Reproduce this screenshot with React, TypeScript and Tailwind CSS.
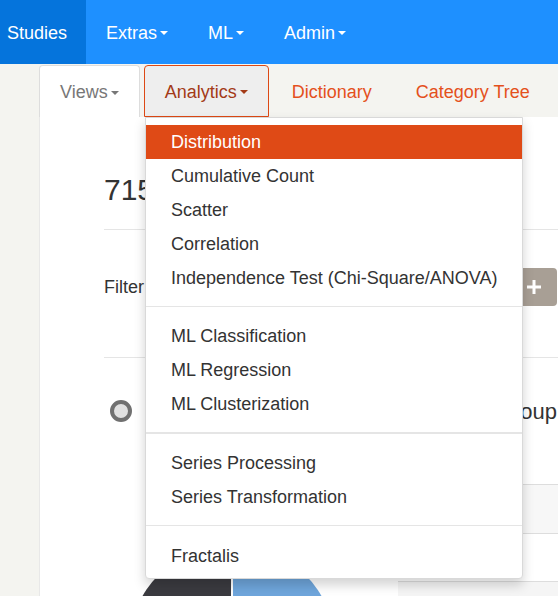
import React from "react";

// Caret a la Bootstrap 3: triangolo 8x4 nel colore del testo
function Caret() {
  return (
    <span className="inline-block w-0 h-0 ml-[3px] align-middle border-x-[4px] border-x-transparent border-t-[4px] border-t-current" />
  );
}

const groups: string[][] = [
  ["Distribution", "Cumulative Count", "Scatter", "Correlation", "Independence Test (Chi-Square/ANOVA)"],
  ["ML Classification", "ML Regression", "ML Clusterization"],
  ["Series Processing", "Series Transformation"],
  ["Fractalis"],
];

function AnalyticsMenu() {
  return (
    <div className="absolute left-[145px] top-[117px] w-[378px] bg-white border border-[#d9d9d9] rounded-b-[4px] pt-[7px] pb-[5px] shadow-[0_6px_12px_rgba(0,0,0,0.175)] text-[#333]">
      {groups.map((items, gi) => (
        <div key={gi}>
          {gi > 0 && (
            <div
              className={
                gi === 2
                  ? "mt-[11px] mb-[12px] h-[2px] bg-[#e5e5e5]"
                  : gi === 3
                    ? "mt-[11px] mb-[13px] h-px bg-[#e5e5e5]"
                    : "mt-[11px] mb-[12px] h-px bg-[#e5e5e5]"
              }
            />
          )}
          {items.map((label) => (
            <div
              key={label}
              className={
                label === "Distribution"
                  ? "h-[34px] leading-[35px] pl-[25px] bg-[#df4a16] text-white"
                  : "h-[34px] leading-[35px] pl-[25px]"
              }
            >
              {label}
            </div>
          ))}
        </div>
      ))}
    </div>
  );
}

function Pie() {
  const r = 103;
  return (
    <svg width={206} height={206} viewBox="0 0 206 206" className="block">
      <path d={`M103 103 L103 0 A${r} ${r} 0 0 1 103 206 Z`} fill="#6fa6dc" />
      <path d={`M103 103 L103 206 A${r} ${r} 0 0 1 103 0 Z`} fill="#3b3b40" />
      <line x1="103" y1="0" x2="103" y2="206" stroke="#fff" strokeWidth="2" />
    </svg>
  );
}

export default function App() {
  return (
    <div
      className="relative h-[596px] w-[558px] overflow-hidden flex flex-col bg-[#f4f4f0] text-[18px]"
      style={{ fontFamily: '"Liberation Sans", Arial, sans-serif' }}
    >
      {/* Navbar */}
      <nav className="h-[64px] shrink-0 flex bg-[#1e90ff] text-white">
        <a className="flex items-center pt-[2px] pl-[7px] pr-[19px] bg-[#0574dc]">Studies</a>
        <a className="flex items-center pt-[2px] px-[20px]">
          Extras
          <Caret />
        </a>
        <a className="flex items-center pt-[2px] px-[20px]">
          ML
          <Caret />
        </a>
        <a className="flex items-center pt-[2px] px-[20px]">
          Admin
          <Caret />
        </a>
      </nav>

      {/* Tabs */}
      <div className="h-[53px] shrink-0 pt-[1px] pl-[39px] flex gap-[2px]">
        <div className="h-[52px] mr-[2px] flex items-center pt-[2px] px-[20px] bg-white border border-b-0 border-[#ddd] rounded-t-[4px] text-[#777]">
          Views
          <Caret />
        </div>
        <div className="h-[52px] flex items-center pt-[2px] px-[20px] bg-[#eee] border border-[#dd4814] rounded-t-[4px] text-[#a33a17]">
          Analytics
          <Caret />
        </div>
        <div className="h-[52px] flex items-center pt-[2px] px-[20px] border border-transparent text-[#e4501c]">
          Dictionary
        </div>
        <div className="h-[52px] flex items-center pt-[2px] px-[20px] border border-transparent text-[#e4501c]">
          Category Tree
        </div>
      </div>

      {/* Pannello contenuto */}
      <div className="flex-1 ml-[39px] bg-white border-l border-[#e8e8e8] pl-[64px] text-[#333]">
        <div className="pt-[56px] h-[89px] text-[30px] leading-[33px]">715</div>
        <div className="mt-[23px] border-t border-[#e5e5e5]" />

        <div className="mt-[38px] h-[38px] flex items-center justify-between">
          <span>Filter</span>
          <div className="w-[46px] h-[38px] mr-[1px] rounded-[4px] bg-[#a89f95] flex items-center justify-center">
            <svg width="14" height="14" viewBox="0 0 14 14">
              <rect x="5.5" y="0" width="3" height="14" fill="#fff" />
              <rect x="0" y="5.5" width="14" height="3" fill="#fff" />
            </svg>
          </div>
        </div>
        <div className="mt-[51px] border-t border-[#e5e5e5]" />

        <div className="mt-[41px] h-[24px] flex items-center">
          <span className="ml-[6px] w-[22px] h-[22px] rounded-full border-[4px] border-[#707070] bg-[#e0e0e0]" />
          <span className="ml-auto mr-[1px] pt-[2px] text-[22px] leading-[24px]">Group</span>
        </div>

        <div className="mt-[61px] flex">
          <div className="w-[294px] shrink-0 pt-[60px] pl-[25px]">
            <Pie />
          </div>
          <div className="flex-1">
            <div className="h-[49px] border-t border-[#ddd] bg-[#f7f7f7]" />
            <div className="h-[48px] border-t border-[#ddd] bg-white" />
            <div className="h-[48px] border-t border-[#ddd] bg-[#f5f5f5]" />
          </div>
        </div>
      </div>

      <AnalyticsMenu />
    </div>
  );
}
